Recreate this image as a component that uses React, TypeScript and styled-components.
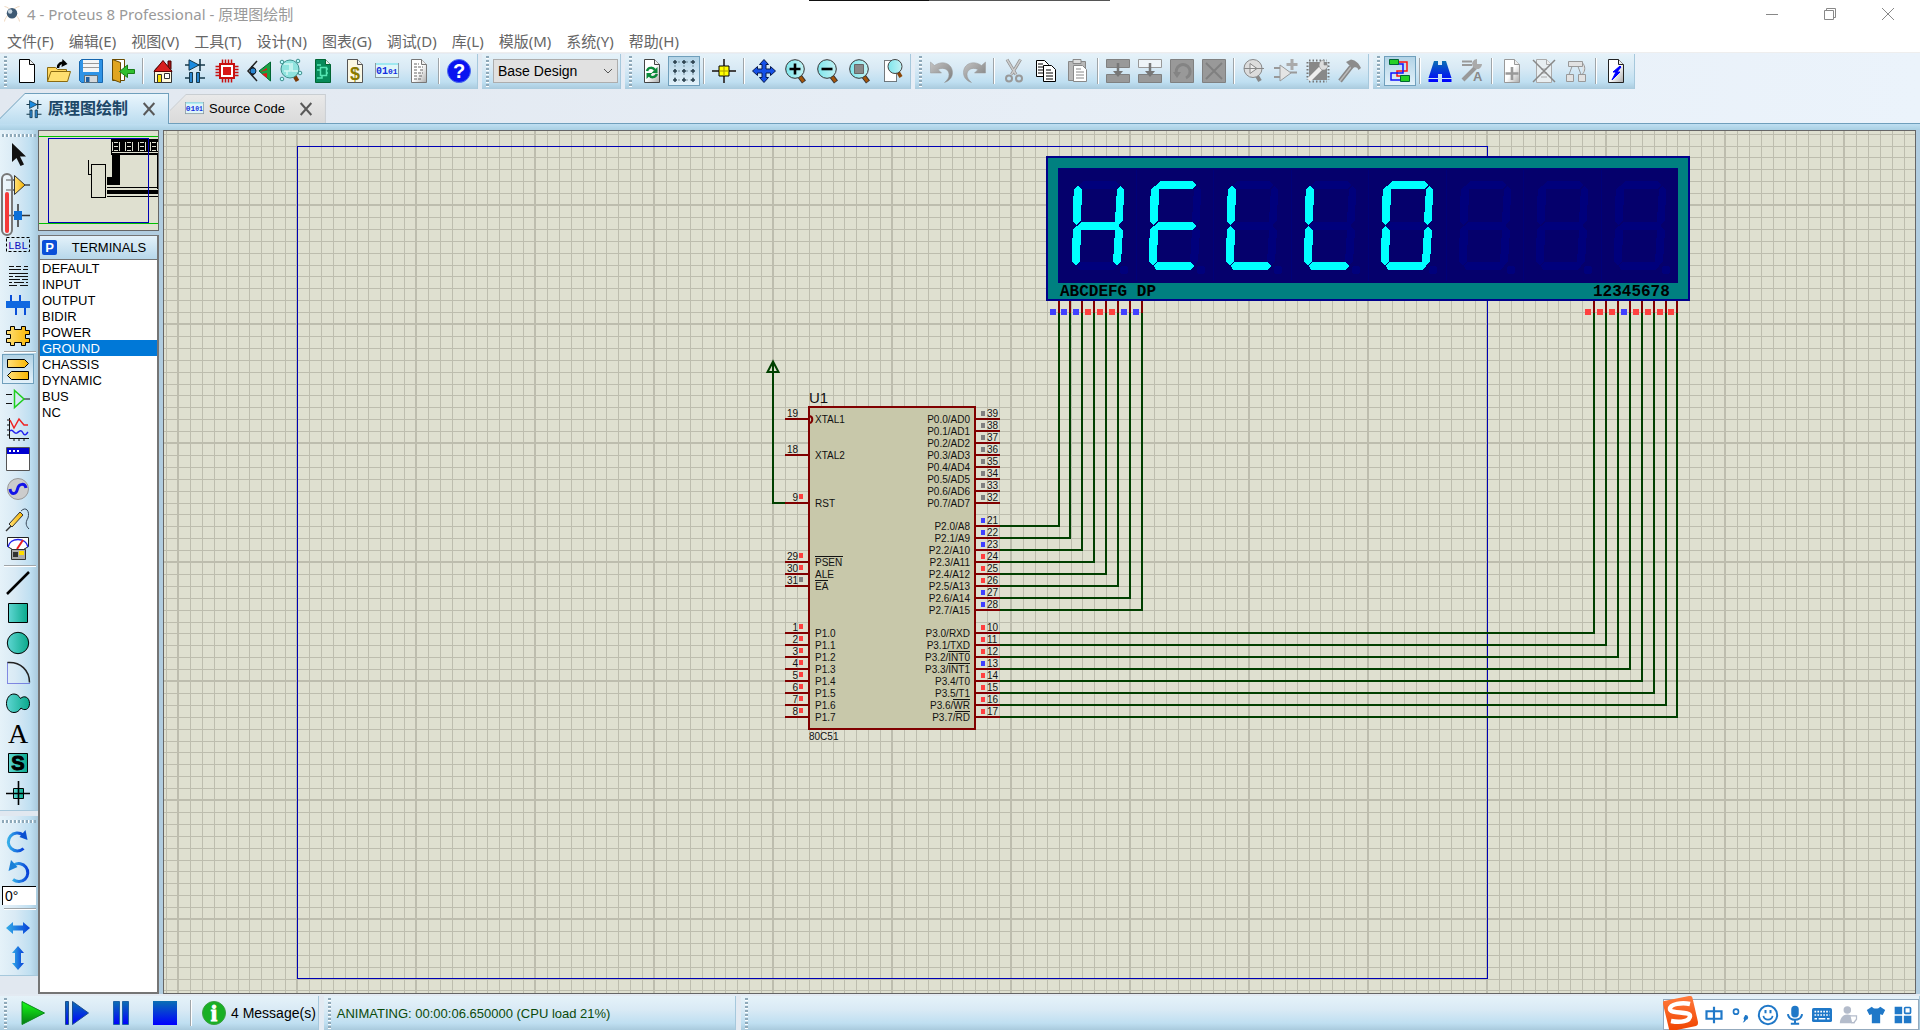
import React from "react";
import styled, { createGlobalStyle, css } from "styled-components";

const UI = `"Liberation Sans", "Noto Sans CJK SC", sans-serif`;
const MENU = `"Noto Sans", "Noto Sans CJK SC", sans-serif`;

const GlobalStyle = createGlobalStyle`
  *, *::before, *::after { box-sizing: border-box; }
  body { margin: 0; background: #e4ebf3; font-family: ${UI}; font-size: 14px; color: #000; }
  button { font: inherit; color: inherit; }
`;

/* ---------- layout ---------- */

const Window = styled.div`
  display: flex;
  flex-direction: column;
  min-height: 100vh;
  position: relative;
  background: linear-gradient(90deg, #e2e8f0, #ebf3fb);
`;

const TopEdge = styled.div`
  position: absolute;
  top: 0;
  left: 809px;
  width: 301px;
  height: 1px;
  background: linear-gradient(90deg, #111 0 120px, #555 120px);
`;

const TitleBar = styled.header`
  display: flex;
  align-items: center;
  height: 27px;
  padding: 0 3px;
  background: #fff;
  color: #999;
  font-family: ${MENU};
  font-size: 15px;
`;

const Title = styled.h1`
  margin: 0 auto 0 6px;
  font-size: 15px;
  font-weight: 400;
  line-height: 20px;
`;

const CaptionButton = styled.button`
  width: 58px;
  height: 27px;
  padding: 0;
  border: 0;
  background: none;
  display: grid;
  place-items: center;
`;

const MenuBar = styled.nav`
  display: flex;
  gap: 15px;
  height: 25px;
  padding: 0 7px 0;
  background: #fff;
`;

const MenuItem = styled.button`
  padding: 0;
  border: 0;
  background: none;
  color: #666;
  font-family: ${MENU};
  font-size: 15px;
  line-height: 28px;
  height: 25px;
`;

const ToolbarRow = styled.div`
  display: flex;
  gap: 4px;
  padding: 1px 0 4px;
  border-top: 1px solid #eee;
  height: 41px;
`;

const panelGradient = css<{ $vertical?: boolean }>`
  background: linear-gradient(
    ${(p) => (p.$vertical ? "90deg" : "180deg")},
    #e5f2f9 0%, #d9eaf5 40%, #bfdff1 80%, #a9cadd 100%
  );
`;

const Toolbar = styled.div`
  ${panelGradient}
  display: flex;
  align-items: center;
  height: 35px;
  padding: 0 2px 1px 0;
  border-right: 1px solid #a6c8dc;
`;

const Grip = styled.span`
  flex: none;
  width: 3px;
  height: 31px;
  margin: 0 4px;
  background: repeating-linear-gradient(180deg, #8fa9b9 0 2px, #fff 2px 3px, transparent 3px 4px);
`;

const Divider = styled.span`
  flex: none;
  width: 2px;
  height: 26px;
  margin: 0 3px;
  background: linear-gradient(90deg, #9fa5a9 50%, #fff 50%);
`;

const ToolButton = styled.button<{ $active?: boolean }>`
  flex: none;
  display: grid;
  place-items: center;
  width: 32px;
  height: 30px;
  padding: 0;
  border: 1px solid ${(p) => (p.$active ? "#6f9fbc" : "transparent")};
  background: ${(p) => (p.$active ? "linear-gradient(180deg, #b2d3e6, #e2f1fa)" : "none")};
`;

const DesignPicker = styled.label`
  position: relative;
  display: block;
  width: 125px;
  height: 24px;
  svg { position: absolute; right: 5px; top: 8px; pointer-events: none; }
`;

const Select = styled.select`
  appearance: none;
  width: 100%;
  height: 24px;
  padding: 0 4px;
  border: 1px solid #adadad;
  border-radius: 0;
  background: #e1e1e1;
  color: #000;
  font: 14px/20px ${UI};
`;

const TabRow = styled.div`
  display: flex;
  align-items: flex-end;
  gap: 1px;
  height: 30px;
`;

const Tab = styled.div<{ $active?: boolean }>`
  --cut: ${(p) => (p.$active ? "25px" : "16px")};
  position: relative;
  display: flex;
  align-items: center;
  height: ${(p) => (p.$active ? 31 : 29)}px;
  margin-bottom: ${(p) => (p.$active ? -1 : 0)}px;
  padding: 0 12px 0 ${(p) => (p.$active ? 25 : 15)}px;
  z-index: 1;
  background: ${(p) => (p.$active ? "#6f9fbc" : "#c9ced2")};
  clip-path: polygon(var(--cut) 0, 100% 0, 100% 100%, 0 100%, 0 var(--cut));
  &::before {
    content: "";
    position: absolute;
    z-index: -1;
    inset: 1px 1px 0 0;
    background: ${(p) =>
      p.$active ? "linear-gradient(180deg, #eaf6fd, #bbdcef)" : "linear-gradient(180deg, #e9e9e9, #dadada)"};
    clip-path: polygon(var(--cut) 0, 100% 0, 100% 100%, 0 100%, 0 var(--cut));
  }
`;

const TabLabel = styled.button<{ $active?: boolean }>`
  display: flex;
  align-items: center;
  gap: 5px;
  padding: 0;
  border: 0;
  background: none;
  font-size: ${(p) => (p.$active ? 16 : 13)}px;
  font-weight: ${(p) => (p.$active ? 700 : 400)};
  color: ${(p) => (p.$active ? "#1d4868" : "#000")};
  line-height: 20px;
  white-space: nowrap;
`;

const TabClose = styled.button`
  display: grid;
  place-items: center;
  width: 16px;
  height: 16px;
  margin-left: 13px;
  padding: 0;
  border: 0;
  background: none;
`;

const Strip = styled.div`
  height: 7px;
  border-top: 1px solid #6f9fbc;
  background: linear-gradient(180deg, #bfdff2, #a9cfe3);
`;

const Main = styled.main`
  flex: 1;
  display: flex;
  gap: 4px;
  padding-right: 4px;
  background: #b1cde0;
`;

const LeftDock = styled.div`
  display: flex;
`;

const SideColumn = styled.div`
  position: relative;
  width: 38px;
  display: flex;
  flex-direction: column;
  gap: 5px;
  background: #e1e8f0;
`;

const SideToolbar = styled.div`
  ${panelGradient}
  display: flex;
  flex-direction: column;
  padding: 0 2px 2px;
  border-bottom: 1px solid #a6c8dc;
`;

const SideGrip = styled.span`
  height: 3px;
  margin: 4px 0 3px;
  background: repeating-linear-gradient(90deg, #8fa9b9 0 2px, #fff 2px 3px, transparent 3px 4px);
`;

const SideDivider = styled.span<{ $wide?: boolean }>`
  height: 2px;
  margin: ${(p) => (p.$wide ? 3 : 1)}px 0 ${(p) => (p.$wide ? 3 : 1)}px 2px;
  background: linear-gradient(180deg, #9fa5a9 50%, #fff 50%);
`;

const AngleInput = styled.input`
  width: 34px;
  height: 19px;
  padding: 0 2px;
  border: 0;
  border-top: 1px solid #000;
  border-left: 1px solid #000;
  background: #fff;
  font: 14px/16px ${UI};
`;

const Slider = styled.div`
  position: absolute;
  left: 1px;
  top: 43px;
  width: 12px;
  height: 63px;
  padding: 17px 2px 1px;
  border: 2px solid #777;
  border-radius: 6px;
  background: rgba(255, 255, 255, 0.35);
  &::after { content: ""; display: block; height: 100%; background: #f43a3a; border-radius: 2px; }
`;

const PickerColumn = styled.section`
  width: 121px;
  display: flex;
  flex-direction: column;
  gap: 4px;
`;

const Preview = styled.div`
  height: 101px;
  border: 1px solid #666;
  background: #dfe0d0;
  svg { display: block; }
`;

const Picker = styled.div`
  flex: 1;
  border: 2px solid #757575;
  border-top-width: 1px;
  background: #fff;
`;

const PickerHead = styled.div`
  display: flex;
  align-items: center;
  height: 24px;
  padding-left: 2px;
  border-bottom: 1px solid #757575;
  background: linear-gradient(180deg, #e4f2fa, #b7d7ea);
`;

const PickButton = styled.button`
  width: 15px;
  height: 15px;
  padding: 0;
  border: 0;
  border-radius: 2px;
  background: #0a4fd8;
  color: #fff;
  font-size: 13px;
  font-weight: 700;
  line-height: 15px;
`;

const PickerTitle = styled.h2`
  flex: 1;
  margin: 0 0 0 4px;
  font-size: 13px;
  font-weight: 400;
  text-align: center;
  line-height: 20px;
`;

const PickerList = styled.ul`
  margin: 0;
  padding: 0;
  list-style: none;
`;

const PickerItem = styled.button<{ $selected?: boolean }>`
  display: block;
  width: 100%;
  height: 16px;
  padding: 1px 2px 0;
  border: 0;
  background: ${(p) => (p.$selected ? "#0078d7" : "none")};
  color: ${(p) => (p.$selected ? "#fff" : "#000")};
  font-size: 13px;
  line-height: 15px;
  text-align: left;
`;

const Canvas = styled.section`
  flex: 1;
  min-width: 0;
  display: flex;
  border: 1px solid #666;
  background: #dfe0d0;
  svg { flex: 1; min-width: 0; }
`;

const StatusRow = styled.footer`
  display: flex;
  gap: 5px;
  height: 36px;
  padding-top: 2px;
  background: #e3eaf2;
  position: relative;
`;

const StatusPanel = styled.div<{ $grow?: boolean }>`
  ${panelGradient}
  display: flex;
  align-items: center;
  height: 34px;
  border-right: 1px solid #a6c8dc;
  white-space: nowrap;
  flex: ${(p) => (p.$grow ? 1 : "none")};
`;

const SimButton = styled.button`
  width: 44px;
  height: 30px;
  padding: 0;
  border: 0;
  background: none;
  display: grid;
  place-items: center;
`;

const MessageButton = styled.button`
  display: flex;
  align-items: center;
  gap: 5px;
  margin-left: 7px;
  padding: 0 2px 0 0;
  border: 0;
  background: none;
  font-size: 14px;
`;

const StatusText = styled.output`
  width: 400px;
  padding-left: 2px;
  font-size: 13px;
  color: #0b4a0b;
`;

const ImeBar = styled.div`
  position: absolute;
  right: 1px;
  top: 5px;
  height: 31px;
  display: flex;
  align-items: center;
  padding: 0 2px 0 36px;
  border: 1px solid #93a9bd;
  background: #fff;
`;

const ImeLogo = styled.span`
  position: absolute;
  left: -2px;
  top: -5px;
  height: 35px;
`;

const ImeButton = styled.button`
  width: 27px;
  height: 28px;
  padding: 0;
  border: 0;
  background: none;
  display: grid;
  place-items: center;
`;

const IconSvg = styled.svg`
  overflow: visible;
`;

/* ---------- icons ---------- */

const Svg = ({ s = 24, children }: { s?: number; children: React.ReactNode }) => (
  <IconSvg width={s} height={s} viewBox="0 0 24 24" fill="none" aria-hidden="true">{children}</IconSvg>
);

const SharedDefs = () => (
  <svg width="0" height="0" style={{ position: "absolute" }} aria-hidden="true">
    <defs>
      <linearGradient id="teal"><stop stopColor="#5fd6d2" /><stop offset="1" stopColor="#0aa98c" /></linearGradient>
      <linearGradient id="blueV" x2="0" y2="1"><stop stopColor="#0a6fb4" /><stop offset="1" stopColor="#0000ff" /></linearGradient>
      <linearGradient id="blueH"><stop stopColor="#35aee8" /><stop offset="1" stopColor="#0640d8" /></linearGradient>
      <linearGradient id="gold"><stop stopColor="#ffe07a" /><stop offset="1" stopColor="#f7b500" /></linearGradient>
      <linearGradient id="grey" x2="1" y2="1"><stop stopColor="#c4c4c4" /><stop offset="1" stopColor="#7c7c7c" /></linearGradient>
      <linearGradient id="page" x2="1" y2="1"><stop offset=".5" stopColor="#fff" /><stop offset="1" stopColor="#aaa" /></linearGradient>
      <linearGradient id="green" x2="0" y2="1"><stop stopColor="#16ff16" /><stop offset="1" stopColor="#067a16" /></linearGradient>
      <linearGradient id="orange" x2="0" y2="1"><stop stopColor="#ff7a3c" /><stop offset="1" stopColor="#f04400" /></linearGradient>
      <linearGradient id="lens"><stop stopColor="#7fe6ec" /><stop offset="1" stopColor="#c2f2f4" /></linearGradient>
    </defs>
  </svg>
);

const Page = ({ stroke = "#000", fill = "#fff" }) => (
  <>
    <path d="M4.5.5h10l5 5v18h-15z" fill={fill} stroke={stroke} />
    <path d="M14.5.5v5h5" fill="#eee" stroke={stroke} />
  </>
);

const Lens = ({ children }: { children?: React.ReactNode }) => (
  <>
    <path d="M15.500 17l4.500 6" stroke="#333" strokeWidth="5" />
    <path d="M15.500 17l4 5.500" stroke="#a5560c" strokeWidth="3" />
    <circle cx="11" cy="10" r="9.300" fill="url(#lens)" stroke="#333" />
    {children}
  </>
);

const Parts = () => (
  <>
    <path d="M2 6h20M17 0v12M2 19h6M16 19h6M8.500 13v11M15.500 13v11" stroke="#16384a" strokeWidth="1.600" />
    <path d="M6 .8v10.500L16 6z" fill="#1b8be0" stroke="#16384a" />
    <path d="M6.500 13.500h3v10h-3zM13.500 13.500h3v10h-3z" fill="#2a86d0" stroke="#16384a" />
  </>
);

const Binary = () => (
  <>
    <rect x=".5" y="4.500" width="23" height="14" fill="#dff6f8" stroke="#8a99a2" />
    <path d="M1 5h22" stroke="#9fe8f0" strokeWidth="2" />
    <text x="1" y="15" fontFamily="Liberation Mono" fontWeight="700" fontSize="10" fill="#1430e0">01</text>
    <text x="13" y="15" fontFamily="Liberation Mono" fontWeight="700" fontSize="8" fill="#1430e0">01</text>
  </>
);

const icons: Record<string, React.ReactNode> = {
  new: <Page />,
  open: <>
    <path d="M.5 22.500v-14h8l2 2h9v3" fill="#ffd75e" stroke="#8a6a10" />
    <path d="M.5 22.500L4 12.500h19.500l-3 10z" fill="#ffdf70" stroke="#8a6a10" />
    <path d="M11 9c0-4 3-6 7-5" stroke="#000" strokeWidth="2.500" /><path d="M15.500 0l5 5-6 3z" fill="#000" />
  </>,
  save: <>
    <path d="M.5 2.500l2-2h21v23h-21l-2-2z" fill="#2e93e6" stroke="#1666ae" />
    <path d="M4 1h16v12H4z" fill="#f4f6f7" /><path d="M4 4.500h16M4 8.500h16" stroke="#999" />
    <path d="M5.500 16.500h13v7h-13z" fill="#d5d9dc" stroke="#5c6f7c" /><path d="M7 18h3.500v5H7z" fill="#1d5ea0" />
  </>,
  exit: <>
    <path d="M1.500.5h12v21h-12z" fill="#fff" stroke="#6a4b00" />
    <path d="M1.500.5l8 3v20l-8-3z" fill="#e0a520" stroke="#6a4b00" />
    <path d="M23.500 10.500h-7V6l-8 6.500 8 6V14.500h7z" fill="#2fbf2f" stroke="#197c19" />
  </>,
  home: <>
    <path d="M17 2h3v8h-3z" fill="#b01010" stroke="#400" /><path d="M3.500 11v12.500h17V11L12 3z" fill="#fff8dc" stroke="#333" />
    <path d="M3 12.500L12 1.500l9 11z" fill="#d81e1e" stroke="#5a0000" />
    <path d="M6.500 15.500h4v8h-4z" fill="#f8e000" stroke="#333" /><path d="M13.500 14.500h5v5h-5z" fill="#fff" stroke="#333" />
  </>,
  parts: <Parts />,
  chip: <>
    <path d="M7.500.5v23M10.500.5v23M13.500.5v23M16.500.5v23M.5 7.500h23M.5 10.500h23M.5 13.500h23M.5 16.500h23" stroke="#c81010" strokeWidth="1.500" />
    <rect x="5" y="5" width="14" height="14" fill="#fff" stroke="#c81010" strokeWidth="2" /><rect x="8" y="8" width="8" height="8" fill="#d81818" />
  </>,
  view3d: <>
    <path d="M10 2L1 12l9 10M4 8c5 0 5 8 0 8" stroke="#222" strokeWidth="1.500" /><circle cx="6" cy="12" r="3" fill="#2a86d0" stroke="#123" />
    <path d="M23.500 3v19L12 12z" fill="#1aa040" stroke="#063" /><path d="M13 13l7-4v2zM15 15l5-1v5z" fill="#e01818" />
  </>,
  gerber: <>
    <path d="M15.500 17l3 5" stroke="#7a3a08" strokeWidth="4" /><circle cx="11" cy="10" r="9" fill="#8fe3de" stroke="#3d8f8c" />
    <path d="M5 5h6v7H5M13 4v8h6M8 16v-4" stroke="#d5f7f4" strokeWidth="1.500" />
    {[[3, 3], [19, 2], [3, 20], [21, 14]].map(([x, y]) => <circle key={x + "-" + y} cx={x} cy={y} r="1.800" fill="#bff" stroke="#3d8f8c" />)}
  </>,
  pcb: <>
    <Page stroke="#063" fill="#078a5a" />
    <path d="M9.500 8.500h6v8h-6zM6 6h4M6 19h5v-3M17 10h-2M17 14h-2M6 11h3" stroke="#57e6b4" strokeWidth="1.500" />
  </>,
  bom: <><Page fill="#fbf8e4" stroke="#555" /><text x="7" y="21" fontFamily="Liberation Sans" fontWeight="700" fontSize="18" fill="#8a7a00">$</text></>,
  source: <Binary />,
  notes: <><Page stroke="#777" fill="url(#page)" /><path d="M7 5h5M7 8h9M7 11h4m2 0h4M7 14h9M7 17h3m2 0h4M7 20h7" stroke="#666" strokeWidth="1.200" strokeDasharray="3 1" /></>,
  help: <><circle cx="12" cy="12" r="11.500" fill="#0a14f0" stroke="#4a6cf0" /><text x="12" y="19" textAnchor="middle" fontFamily="Liberation Sans" fontWeight="700" fontSize="20" fill="#fff">?</text></>,
  refresh: <><Page stroke="#444" fill="url(#page)" /><path d="M7 12c1-4 6-4 8-1M17 15c-2 4-6 4-8 1" stroke="#0c8a3a" strokeWidth="2.500" /><path d="M17.500 8v6h-6zM6.500 20v-6h6z" fill="#0c8a3a" /></>,
  grid: <g stroke="#2a3f4c"><path d="M2 3h20M2 12h20M2 21h20M3 2v20M12 2v20M21 2v20" strokeDasharray="2 2" opacity=".5" />
    {[3, 12, 21].map((y) => [3, 12, 21].map((x) => <path key={x + "-" + y} d={`M${x - 2} ${y}h4M${x} ${y - 2}v4`} strokeWidth="1.500" />))}</g>,
  origin: <><path d="M12 0v24M0 12h24" stroke="#444" strokeWidth="2" /><path d="M7 7h10v10H7z" fill="#ff0" stroke="#000" /><path d="M12 7v10M7 12h10" stroke="#a90" /></>,
  pan: <path d="M12 .5l4.500 5H14V10h4.500V7.500l5 4.500-5 4.500V14H14v4.500h2.500l-4.500 5-4.500-5H10V14H5.500v2.500L.5 12l5-4.500V10H10V5.500H7.500z" fill="#1550e8" stroke="#061a50" />,
  zoomin: <Lens><path d="M5.500 10h11M11 4.500v11" stroke="#000" strokeWidth="2.600" /></Lens>,
  zoomout: <Lens><path d="M5.500 10h11" stroke="#000" strokeWidth="2.600" /></Lens>,
  zoomall: <Lens><path d="M6.500 5.500h9v9h-9z" fill="#888" stroke="#666" /></Lens>,
  zoomarea: <><path d="M4.500 1.500h12v21h-12z" fill="#fff" stroke="#000" strokeDasharray="1 1" /><path d="M18 13l3 5" stroke="#8a4608" strokeWidth="3.500" /><circle cx="15" cy="7.500" r="7" fill="url(#lens)" stroke="#444" /></>,
  undo: <path d="M.5 3v11h11L8 10.500c6-3 11 .500 11 5 0 3-1.500 5.500-4.500 8 6-2 8-6 8-10C22.500 5 13 .5 4.500 6.500z" fill="url(#grey)" stroke="#999" strokeWidth=".5" />,
  redo: <path d="M23.500 3v11h-11l3.500-3.500c-6-3-11 .500-11 5 0 3 1.500 5.500 4.500 8-6-2-8-6-8-10C1.500 5 11 .5 19.500 6.500z" fill="url(#grey)" stroke="#999" strokeWidth=".5" />,
  cut: <><path d="M5 .5l9 15M18.500.5l-9 15" stroke="#8f8f8f" strokeWidth="3" /><path d="M5 .5l9 15M18.500.5l-9 15" stroke="#ccc" strokeWidth="1.500" /><circle cx="7" cy="19.500" r="3" stroke="#999" strokeWidth="2" /><circle cx="17" cy="19.500" r="3" stroke="#999" strokeWidth="2" /></>,
  copy: <><path d="M2.500 1.500h8l4 4v12h-12z" fill="#fff" stroke="#000" /><path d="M4 5h5M4 8h8M4 11h8M4 14h8" stroke="#000" /><path d="M9.500 6.500h8l4 4v12h-12z" fill="#fff" stroke="#000" /><path d="M12 11h5M12 14h7M12 17h7M12 20h7" stroke="#000" /></>,
  paste: <><path d="M2.500 2.500h17v19h-17z" fill="#b8b8b8" stroke="#888" /><path d="M7 .5h8v4H7z" fill="#ddd" stroke="#888" /><path d="M7.500 6.500h9l4 4v12h-13z" fill="#fff" stroke="#888" /><path d="M10 10h5M10 13h8M10 16h8M10 19h8" stroke="#888" /></>,
  blockcopy: <><path d="M.5.5h23v8H.5zM.5 15.500h23v8H.5z" fill="#999" stroke="#808080" /><path d="M12 4v12" stroke="#777" strokeWidth="2.500" /><path d="M7 12h10l-5 6z" fill="#777" /></>,
  blockmove: <><path d="M.5.5h23v8H.5z" fill="#eef4f8" stroke="#999" /><path d="M.5 15.500h23v8H.5z" fill="#999" stroke="#808080" /><path d="M12 4v12" stroke="#777" strokeWidth="2.500" /><path d="M7 12h10l-5 6z" fill="#777" /></>,
  blockrot: <><path d="M.5.5h23v23H.5z" fill="#999" stroke="#808080" /><path d="M7 16a7 7 0 1 1 9 3" stroke="#848484" strokeWidth="3" /><path d="M3 13h8l-4 6z" fill="#848484" /></>,
  blockdel: <><path d="M.5.5h23v23H.5z" fill="#999" stroke="#808080" /><path d="M4 4l16 16M20 4L4 20" stroke="#808080" strokeWidth="2" /></>,
  picklib: <><path d="M15 17l3 5" stroke="#888" strokeWidth="4" /><circle cx="11" cy="9.500" r="9" fill="#dcdcdc" stroke="#888" /><path d="M2 9.500h20M8 4.500v10l7-5z" stroke="#888" fill="#eee" /></>,
  makedev: <><path d="M0 9h6M0 18h6M16 13.500h7" stroke="#999" strokeWidth="2" /><path d="M6 6v16l11-8z" fill="#e4e4e4" stroke="#999" /><path d="M18 0v11M12.500 5.500h11" stroke="#aaa" strokeWidth="3" /></>,
  package: <><path d="M3 3h18v18H3z" fill="#888" /><path d="M3 1.500h18M3 22.500h18M1.500 3v18M22.500 3v18" stroke="#777" strokeWidth="2" strokeDasharray="1.500 2" /><path d="M3 21L17 7" stroke="#eee" strokeWidth="4.500" /><path d="M14 9a5 5 0 0 1 4-8v5h4a5 5 0 0 1-6 5z" fill="#ddd" stroke="#888" strokeWidth=".6" /></>,
  decompose: <><path d="M2 22L13 8" stroke="#888" strokeWidth="4.500" /><path d="M2 22L13 8" stroke="#bbb" strokeWidth="1.500" /><path d="M8 3l5-2.500c5 1 8 4 10 8.500l-2.500 2c-1-3-3-3-4.500-2.500L14 10l-3-4z" fill="#8c8c8c" /></>,
  wires: <><path d="M10 3h9v9H9v5h4" stroke="#f11" strokeWidth="1.500" /><path d="M10 5h5v9H3v7h10" stroke="#11f" strokeWidth="1.500" /><path d="M1.500.5h9v5h-9zM12.500 16.500h9v6h-9z" fill="#26d026" stroke="#063" /></>,
  find: <><path d="M6 2h4v4h4V2h4l5.500 17v4H14v-8h-4v8H.5v-4z" fill="url(#blueV)" /><path d="M0 19.500h10M14 19.500h10" stroke="#cfe6f5" /></>,
  proptool: <><path d="M2 2.500h10M2 6h10" stroke="#999" strokeWidth="2" /><path d="M3 21L17 7" stroke="#999" strokeWidth="4" /><path d="M13 8a5 5 0 0 1 4-8v5h5a5 5 0 0 1-6 5z" fill="#aaa" /><text x="13" y="22" fontFamily="Liberation Sans" fontWeight="700" fontSize="13" fill="#888">A</text></>,
  addsheet: <><Page stroke="#999" fill="url(#page)" /><path d="M12 8v13M5.500 14.500h13" stroke="#999" strokeWidth="2.600" /></>,
  delsheet: <><Page stroke="#aaa" fill="#e8eef1" /><path d="M9 10h6M9 14h6M9 18h6" stroke="#aaa" /><path d="M1 1l22 22M23 1L1 23" stroke="#888" strokeWidth="1.500" /></>,
  hierarchy: <path d="M4.500 2.500h14v5h-14zM2.500 15.500h7v7h-7zM14.500 15.500h7v7h-7zM8 7.500l-3 8M14 7.500l3 8M18.500 4c3 3 3 8 0 11" fill="#e2e2e2" stroke="#999" />,
  erc: <><Page stroke="#222" fill="url(#page)" /><path d="M16 7l-7 6h3l-4 8 8-8h-3l4-5z" fill="#00f" stroke="#00f" /></>,
  /* side tools */
  select: <path d="M6 0v19l4.500-4 4 8 3.500-1.500-4-8h6z" fill="#111" />,
  component: <><path d="M0 7h9M0 17h9M18 12h6" stroke="#000" /><path d="M8.500 2.500v19L19 12z" fill="url(#gold)" stroke="#333" /></>,
  junction: <><path d="M12 1v23M0 12.500h24" stroke="#333" strokeWidth="1.500" /><path d="M8 8h8v9H8z" fill="#0a6fd8" /></>,
  label: <><path d="M.5 4.500h23v14H.5z" stroke="#000" strokeDasharray="3 2" /><text x="2" y="16" fontFamily="Liberation Mono" fontSize="11" fill="#1010c0">LBL</text></>,
  script: <path d="M3 3.500h5m2 0h5m3 0h4M3 6.500h12m2 0h5M3 10.500h19M3 13.500h4m2 0h13M3 16.500h11m2 0h6M3 19.500h3m2 0h10m2 0h2M3 22.500h8m3 0h8" stroke="#111" />,
  bus: <><path d="M5 2v8M14 2v8M10 14v8M19 14v8" stroke="#0a4fd8" strokeWidth="2" /><path d="M0 8h24v7H0z" fill="#1068e0" /></>,
  subckt: <path d="M4.500 3.500h4v3h7v-3h4v4h4v4h-4v4h4v4h-4v3h-4v-3h-7v3h-4v-3h-4v-4h4v-4h-4v-4h4z" fill="url(#gold)" stroke="#000" />,
  terminals: <path d="M1.500 2.500h17l4 4-4 4h-17zM22.500 14.500h-17l-4 4 4 4h17z" fill="url(#gold)" stroke="#000" />,
  pin: <><path d="M0 7.500h6M0 16.500h6M18 12h6" stroke="#111" /><path d="M8.500 3.500v17L18 12z" stroke="#1fcf1f" strokeWidth="1.500" /></>,
  graph: <><path d="M3.500 1v20.500H23M1 3h3M1 8h3M1 13h3M1 18h3M8 21v3M13 21v3M18 21v3" stroke="#111" /><path d="M4 3l4 8 5-9 5 6h4" stroke="#e22" strokeWidth="1.500" /><path d="M4 14c3-3 4 4 7 2s4-4 6 0 4 0 5-1" stroke="#22e" strokeWidth="1.500" /></>,
  popup: <><path d="M.5.5h23v23H.5z" fill="#fff" stroke="#555" /><path d="M1 1h22v6H1z" fill="#0000d0" /><path d="M3 4h2m2 0h2m2 0h2" stroke="#fff" strokeWidth="2" /></>,
  generator: <><circle cx="12" cy="12" r="10.500" fill="#ccc" stroke="#999" /><path d="M4 12c1 6 6 6 7.500 0S19 6 20 11" stroke="#1414e8" strokeWidth="3" /></>,
  probe: <><path d="M0 24l5-5" stroke="#333" strokeWidth="1.500" /><path d="M3 17L14 5l3 3L6 20z" fill="url(#gold)" stroke="#333" /><path d="M15 4c5-5 9 0 7 7-3 5-2 8 1 11" stroke="#345" /></>,
  meter: <><path d="M1.500.5h21v9l-5 3h-11l-5-3z" fill="#fff" stroke="#222" /><path d="M2 10C4 0 20 0 22 10" stroke="#22e" strokeWidth="1.500" /><path d="M11 12l6-9" stroke="#e22" strokeWidth="2" /><path d="M5.500 12.500h14v10h-14z" fill="#aaa" stroke="#333" /><path d="M7 15h5v5H7z" fill="#333" /><path d="M13 14h5v4h-5z" fill="#fd0" /></>,
  line: <path d="M1 23L23 1" stroke="#000" strokeWidth="2.500" />,
  box: <path d="M2.500 2.500h19v19h-19z" fill="url(#teal)" stroke="#000" />,
  circle: <circle cx="12" cy="12" r="10.700" fill="url(#teal)" stroke="#000" />,
  arc: <><path d="M1.500 1.500v21h22" stroke="#22c" strokeDasharray="1 1" /><path d="M1.500 1.500c13-1 22 8 22 20" stroke="#222" strokeWidth="1.500" /></>,
  path: <path d="M8 3c3 0 5 2 6.500 4.500C18 4 23.500 6 23.500 12.500S18 20 15 17c-2 3-4 4.500-7 4.500-5 0-7.500-4.500-7.500-9S3 3 8 3z" fill="url(#teal)" stroke="#000" />,
  text: <text x="12" y="22" textAnchor="middle" fontFamily="Liberation Serif" fontSize="28" fill="#000">A</text>,
  symbol: <><path d="M2.500 2.500h19v19h-19z" fill="url(#teal)" stroke="#000" /><text x="12" y="19" textAnchor="middle" fontFamily="Liberation Sans" fontWeight="700" fontSize="20" fill="#000" stroke="#000">S</text></>,
  marker: <><path d="M7.500 7.500h10v10h-10z" fill="url(#teal)" stroke="#000" /><path d="M12.500 0v24M0 12.500h24" stroke="#000" strokeWidth="1.600" /></>,
  rotcw: <><path d="M17.500 19.500A9 9 0 1 1 17 6" stroke="url(#blueH)" strokeWidth="3" /><path d="M19.500 1l2 10-8-3z" fill="#0a50d0" /></>,
  rotccw: <><path d="M7 20.500A9 9 0 1 0 8 6" stroke="url(#blueH)" strokeWidth="3" /><path d="M5 1L2.500 12l9-4z" fill="#1a80d8" /></>,
  fliph: <path d="M0 12l7-6v3.500h10V6l7 6-7 6v-3.500H7V18z" fill="url(#blueH)" />,
  flipv: <path d="M12 0l6 7h-3v10h3l-6 7-6-7h3V7H6z" fill="url(#blueH)" />,
  play: <path d="M1 .5v23L23.500 12z" fill="url(#green)" stroke="#0a8a1a" />,
  step: <path d="M.5.500h3v23h-3zM7.500.500v23L23.500 12z" fill="url(#blueV)" stroke="#1c4f90" />,
  pause: <path d="M4.500.5h6v23h-6zM13.500.5h6v23h-6z" fill="url(#blueV)" stroke="#1c62a8" />,
  stop: <path d="M0 0h24v24H0z" fill="url(#blueV)" />,
  info: <><circle cx="12" cy="12" r="11.500" fill="#18b024" stroke="#3aa040" /><text x="12" y="20" textAnchor="middle" fontFamily="Liberation Serif" fontWeight="700" fontSize="23" fill="#fff" stroke="#fff">i</text></>,
  close: <path d="M4 3l16 18M20 3L4 21" stroke="#595959" strokeWidth="3" />,
};

const Tool = ({ id, active }: { id: string; active?: boolean }) => (
  <ToolButton $active={active} aria-label={id}><Svg>{icons[id]}</Svg></ToolButton>
);

const renderTools = (list: string, active: string) =>
  list.split(" ").map((id, i) => (id === "|" ? <Divider key={i} /> : <Tool key={i} id={id} active={id === active} />));

const renderSide = (list: string) =>
  list.split(" ").map((id, i) => (id === "|" ? <SideDivider key={i} /> : <Tool key={i} id={id} active={id === "terminals"} />));

/* ---------- schematic ---------- */

const RED = "#ff4040", BLUE = "#4040ff", GREY = "#808080";
const PIN = "#800000", WIRE = "#004000";
const minor = [13, 25, 37, 49, 61, 72, 84, 96, 108];

const SEGMENTS: Record<string, string> = {
  a: "20,187 25,181 57,181 61,185 57,189 21,189",
  b: "62,186 66,189 65,221 60,225 57,221 58,204 59,189",
  c: "60,226 65,230 63,262 59,265 55,262 57,230",
  d: "19,266 22,262 55,262 59,266 56,270 21,270",
  e: "18,226 23,230 22,261 18,265 14,262 14,246 15,230",
  f: "20,186 24,189 23,221 18,225 15,221 15,204 16,189",
  g: "19,226 23,222 57,222 61,226 57,230 22,230",
};
const DIGITS = ["bcefg", "adefg", "def", "def", "abcdef", "", "", ""];
const DIGIT_X = [1058, 1135, 1212, 1290, 1367, 1445, 1522, 1600];

type PinDef = { n: string; y: number; label: string; over?: [number, number]; state?: string };

const LEFT_PINS: PinDef[] = [
  { n: "19", y: 419, label: "XTAL1" },
  { n: "18", y: 455, label: "XTAL2" },
  { n: "9", y: 503, label: "RST", state: RED },
  { n: "29", y: 562, label: "PSEN", over: [815, 843], state: RED },
  { n: "30", y: 574, label: "ALE", state: RED },
  { n: "31", y: 586, label: "EA", over: [815, 828], state: GREY },
  ...[0, 1, 2, 3, 4, 5, 6, 7].map((i) => ({ n: String(i + 1), y: 633 + 12 * i, label: `P1.${i}`, state: RED })),
];

const P2_STATE = [BLUE, BLUE, BLUE, RED, RED, RED, BLUE, BLUE];
const P3_STATE = [RED, RED, RED, BLUE, RED, RED, RED, RED];
const P3_LABEL = ["RXD", "TXD", "INT0", "INT1", "T0", "T1", "WR", "RD"];
const P3_OVER: ([number, number] | undefined)[] = [undefined, undefined, [948, 970], [948, 970], undefined, undefined, [953, 970], [955, 970]];
const EIGHT = [0, 1, 2, 3, 4, 5, 6, 7];

const RIGHT_PINS: PinDef[] = [
  ...EIGHT.map((i) => ({ n: String(39 - i), y: 419 + 12 * i, label: `P0.${i}/AD${i}`, state: GREY })),
  ...EIGHT.map((i) => ({ n: String(21 + i), y: 526 + 12 * i, label: `P2.${i}/A${8 + i}`, state: P2_STATE[i] })),
  ...EIGHT.map((i) => ({ n: String(10 + i), y: 633 + 12 * i, label: `P3.${i}/${P3_LABEL[i]}`, over: P3_OVER[i], state: P3_STATE[i] })),
];

const SEG_X = [1059, 1070, 1082, 1094, 1106, 1118, 1130, 1142];
const DIG_X = [1594, 1606, 1618, 1630, 1642, 1654, 1666, 1677];

const DisplayPins = ({ xs, states, top }: { xs: number[]; states: string[]; top: number }) => (
  <>
    {xs.map((x, i) => (
      <g key={x}>
        <path d={`M${x} 313V${top + 12 * i}H999`} stroke={WIRE} strokeWidth="2" />
        <path d={`M${x} 301v12`} stroke={PIN} strokeWidth="2" />
        <rect x={x - 9} y="309" width="6" height="6" fill={states[i]} />
      </g>
    ))}
  </>
);

const Schematic = () => (
  <svg role="img" aria-label="80C51 driving an eight digit display" fill="none">
    <defs>
      <pattern id="gridlines" x="13" y="73" width="119" height="119" patternUnits="userSpaceOnUse">
        <g fill="#bdbdae">
          <rect width="2" height="119" /><rect width="119" height="2" />
          {minor.map((m) => (
            <React.Fragment key={m}>
              <rect x={m} width="1" height="119" /><rect y={m} width="119" height="1" />
            </React.Fragment>
          ))}
        </g>
      </pattern>
    </defs>
    <rect width="100%" height="100%" fill="url(#gridlines)" />
    <g transform="translate(-164 -131)" fontFamily="Liberation Sans" fontSize="10">
      <g shapeRendering="crispEdges">
        <rect x="297.500" y="146.500" width="1190" height="832" stroke="#0000b4" />
        <rect x="1047" y="157" width="642" height="143" fill="#008080" stroke="#00008b" strokeWidth="2" />
        <rect x="1058" y="168" width="620" height="115" fill="#05006c" />
        <path d="M1058 168.500h620M1058.500 168v115" stroke="#00007f" />
        {DIGIT_X.slice(1).map((x) => <path key={x} d={`M${x + 1.5} 170v111`} stroke="#000078" />)}
        {DIGIT_X.map((x, i) => (
          <g key={x} transform={`translate(${x} 0)`}>
            {Object.keys(SEGMENTS).map((s) => (
              <polygon key={s} points={SEGMENTS[s]} fill={DIGITS[i].includes(s) ? "#00ffff" : "#00007c"} />
            ))}
            <circle cx="66" cy="270" r="4.500" fill="#00007c" />
          </g>
        ))}
        <DisplayPins xs={SEG_X} states={P2_STATE} top={526} />
        <DisplayPins xs={DIG_X} states={P3_STATE} top={633} />
        <path d="M785 503H773V362" stroke={WIRE} strokeWidth="2" />
        <rect x="809" y="407" width="166" height="322" fill="#c8c8aa" stroke={PIN} strokeWidth="2" />
      </g>
      <path d="M773 361.500l-5.500 10.500h11z" stroke={WIRE} strokeWidth="2" />
      <path d="M810 416c3 1 3 6 0 7" stroke={PIN} strokeWidth="2" />
      <g fontFamily="Liberation Mono" fontWeight="700" fontSize="16" fill="#000">
        <text x="1060" y="296">ABCDEFG DP</text>
        <text x="1593" y="296">12345678</text>
      </g>
      <text x="809" y="403" fontSize="15" fill="#111">U1</text>
      <text x="809" y="740" fill="#111">80C51</text>
      {LEFT_PINS.map((p) => (
        <g key={p.n} fill="#111">
          <path d={`M785 ${p.y}h23`} stroke={PIN} strokeWidth="2" shapeRendering="crispEdges" />
          <text x="798" y={p.y - 2} textAnchor="end">{p.n}</text>
          <text x="815" y={p.y + 4}>{p.label}</text>
          {p.state && <rect x="799" y={p.y - 9} width="4" height="5" fill={p.state} />}
          {p.over && <path d={`M${p.over[0]} ${p.y - 5.5}H${p.over[1]}`} stroke="#111" />}
        </g>
      ))}
      {RIGHT_PINS.map((p) => (
        <g key={p.n} fill="#111">
          <path d={`M976 ${p.y}h24`} stroke={PIN} strokeWidth="2" shapeRendering="crispEdges" />
          <text x="987" y={p.y - 2}>{p.n}</text>
          <text x="970" y={p.y + 4} textAnchor="end">{p.label}</text>
          <rect x="981" y={p.y - 8} width="4" height="5" fill={p.state} />
          {p.over && <path d={`M${p.over[0]} ${p.y - 5.5}H${p.over[1]}`} stroke="#111" />}
        </g>
      ))}
    </g>
  </svg>
);

const Overview = () => (
  <svg width="119" height="99" fill="none" shapeRendering="crispEdges" role="img" aria-label="Sheet overview">
    <path d="M0 5.500h119M0 92.500h119" stroke="#00c000" />
    <path d="M72 8h47v16H72z" fill="#000" />
    {[75, 88, 101, 113].map((x) => (
      <path key={x} d={`M${x} 11.500h4M${x} 15.500h4M${x} 19.500h4M${x - 1.5} 11v9M${x + 5.5} 11v9`} stroke="#dfe0d0" />
    ))}
    <path d="M73 21.500h46" stroke="#dfe0d0" />
    <path d="M73 24h8v30H68v-8h5z" fill="#000" />
    <path d="M118.500 24v34M68 56.500h51M68 65.500h51" stroke="#000" />
    <path d="M68 59h51v4H68z" fill="#000" />
    <path d="M52.500 33.500h14v33h-14zM49.500 29v14h2" stroke="#000" />
    <path d="M9.500 7.500h100v84H9.500z" stroke="#0000b4" />
  </svg>
);

/* ---------- page ---------- */

const MENUS = ["文件(F)", "编辑(E)", "视图(V)", "工具(T)", "设计(N)", "图表(G)", "调试(D)", "库(L)", "模版(M)", "系统(Y)", "帮助(H)"];
const TERMINALS = ["DEFAULT", "INPUT", "OUTPUT", "BIDIR", "POWER", "GROUND", "CHASSIS", "DYNAMIC", "BUS", "NC"];
const IME = "#1f78c8";

const imeIcons: [string, React.ReactNode][] = [
  ["中文", <path d="M3 7.500h18v9H3zM12 2v20" stroke={IME} strokeWidth="2.600" />],
  ["标点", <><circle cx="6" cy="8" r="3" stroke={IME} strokeWidth="2" /><path d="M17 12a3 3 0 1 1 1 6c-1 2-2 3-4 3 2-2 2-3 1-5z" fill={IME} /></>],
  ["表情", <><circle cx="12" cy="12" r="11" stroke={IME} strokeWidth="2.400" /><path d="M6.500 13c1 6 10 6 11 0" stroke={IME} strokeWidth="2" /><path d="M9 6v4M15 6v4" stroke={IME} strokeWidth="2.400" /></>],
  ["语音", <><rect x="7.500" y="1" width="9" height="14" rx="4.500" fill={IME} /><path d="M3.500 11c1 9 16 9 17 0M12 18v5M7 22.500h10" stroke={IME} strokeWidth="2.400" /></>],
  ["键盘", <><rect y="3.500" width="24" height="17" rx="2" fill={IME} /><path d="M3 8h18M3 12h18" stroke="#fff" strokeWidth="2" strokeDasharray="2 1.500" /><path d="M3 16.500h3m2 0h8m2 0h3" stroke="#fff" strokeWidth="2" /></>],
  ["账户", <><circle cx="10" cy="6" r="4.500" fill="#b4bccb" /><path d="M1 22c0-14 18-14 18 0z" fill="#b4bccb" /><path d="M13 13h8v4l-3 4h-3z" fill="#fff" stroke="#b4bccb" strokeWidth="1.500" /></>],
  ["皮肤", <path d="M7 2c2 3 8 3 10 0l6 4-3 6-3-1v11H7V11l-3 1-3-6z" fill={IME} />],
  ["工具箱", <><path d="M2 2h9v9H2zM2 13h9v9H2zM13 13h9v9h-9z" fill={IME} /><rect x="14" y="3" width="7" height="7" rx="1" stroke={IME} strokeWidth="2" /></>],
];

export default function App() {
  return (
    <Window>
      <GlobalStyle />
      <SharedDefs />
      <TopEdge />
      <TitleBar>
        <Svg s={18}>
          <path d="M2 2c5 0 20 14 20 20M22 2C16 2 2 16 2 22" stroke="#e8c9a8" />
          <circle cx="12" cy="11" r="7" fill="#3e5a74" /><circle cx="9.500" cy="8.500" r="3" fill="#c5d4e0" />
        </Svg>
        <Title>4 - Proteus 8 Professional - 原理图绘制</Title>
        <CaptionButton aria-label="Minimize"><svg width="12" height="12"><path d="M0 6.500h12" stroke="#888" /></svg></CaptionButton>
        <CaptionButton aria-label="Restore"><svg width="12" height="12" fill="none"><path d="M.5 2.500h9v9h-9zM2.500 2.500v-2h9v9h-2" stroke="#888" /></svg></CaptionButton>
        <CaptionButton aria-label="Close"><svg width="12" height="12"><path d="M0 0l12 12M12 0L0 12" stroke="#888" /></svg></CaptionButton>
      </TitleBar>
      <MenuBar>{MENUS.map((m) => <MenuItem key={m}>{m}</MenuItem>)}</MenuBar>
      <ToolbarRow>
        <Toolbar><Grip />{renderTools("new open save exit | home parts chip view3d gerber pcb bom source notes | help", "")}</Toolbar>
        <Toolbar>
          <Grip />
          <DesignPicker>
            <Select aria-label="Design variant" defaultValue="Base Design"><option>Base Design</option></Select>
            <svg width="10" height="8" fill="none"><path d="M1 2l4 4 4-4" stroke="#555" /></svg>
          </DesignPicker>
        </Toolbar>
        <Toolbar><Grip />{renderTools("refresh grid | origin | pan zoomin zoomout zoomall zoomarea", "grid")}</Toolbar>
        <Toolbar><Grip />{renderTools("undo redo | cut copy paste | blockcopy blockmove blockrot blockdel | picklib makedev package decompose", "")}</Toolbar>
        <Toolbar><Grip />{renderTools("wires | find proptool | addsheet delsheet hierarchy | erc", "wires")}</Toolbar>
      </ToolbarRow>
      <TabRow>
        <Tab $active>
          <TabLabel $active><Svg s={18}><Parts /></Svg>原理图绘制</TabLabel>
          <TabClose aria-label="Close schematic"><Svg s={16}>{icons.close}</Svg></TabClose>
        </Tab>
        <Tab>
          <TabLabel><Svg s={19}><Binary /></Svg>Source Code</TabLabel>
          <TabClose aria-label="Close source code"><Svg s={16}>{icons.close}</Svg></TabClose>
        </Tab>
      </TabRow>
      <Strip />
      <Main>
        <LeftDock>
          <SideColumn>
            <SideToolbar $vertical>
              <SideGrip />
              {renderSide("select component junction label script bus subckt | terminals pin graph popup generator probe meter | line box circle arc path text symbol marker")}
            </SideToolbar>
            <SideToolbar $vertical>
              <SideGrip />
              {renderSide("rotcw rotccw")}
              <AngleInput aria-label="Rotation angle" defaultValue="0°" />
              <SideDivider $wide />
              {renderSide("fliph flipv")}
            </SideToolbar>
            <Slider aria-hidden="true" />
          </SideColumn>
          <PickerColumn>
            <Preview><Overview /></Preview>
            <Picker>
              <PickerHead>
                <PickButton aria-label="Pick devices">P</PickButton>
                <PickerTitle>TERMINALS</PickerTitle>
              </PickerHead>
              <PickerList>
                {TERMINALS.map((t) => <li key={t}><PickerItem $selected={t === "GROUND"}>{t}</PickerItem></li>)}
              </PickerList>
            </Picker>
          </PickerColumn>
        </LeftDock>
        <Canvas><Schematic /></Canvas>
      </Main>
      <StatusRow>
        <StatusPanel>
          <Grip />
          {["play", "step", "pause", "stop"].map((id) => (
            <SimButton key={id} aria-label={id}><Svg>{icons[id]}</Svg></SimButton>
          ))}
          <Divider />
          <MessageButton><Svg>{icons.info}</Svg>4 Message(s)</MessageButton>
        </StatusPanel>
        <StatusPanel><Grip /><StatusText>ANIMATING: 00:00:06.650000 (CPU load 21%)</StatusText></StatusPanel>
        <StatusPanel $grow><Grip /></StatusPanel>
        <ImeBar>
          <ImeLogo>
            <svg width="36" height="36" viewBox="0 0 36 36" fill="none" aria-hidden="true">
              <path d="M2 6L27 1c2 0 3 0 3.500 2L36 27c0 2 0 3-2 4L10 36c-2 0-3-1-3-2L1 9c0-2 0-3 1-3z" fill="url(#orange)" />
              <path d="M28 9c-8-2-20 0-20 5s20 2 20 7-9 7-19 5" stroke="#fff" strokeWidth="4.500" />
            </svg>
          </ImeLogo>
          {imeIcons.map(([name, art]) => <ImeButton key={name} aria-label={name}><Svg s={20}>{art}</Svg></ImeButton>)}
        </ImeBar>
      </StatusRow>
    </Window>
  );
}
